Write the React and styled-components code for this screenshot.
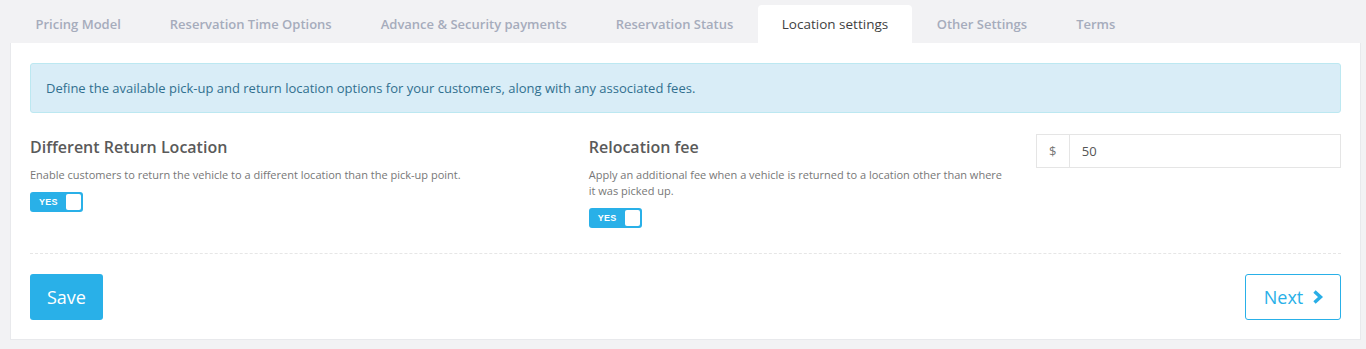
import React from "react";
import styled, { createGlobalStyle } from "styled-components";

const GlobalStyle = createGlobalStyle`
  html, body {
    margin: 0;
    padding: 0;
    background: #f2f2f4;
    font-family: "Open Sans", "Liberation Sans", sans-serif;
  }
  * { box-sizing: border-box; }
`;

const tabs = [
  "Pricing Model",
  "Reservation Time Options",
  "Advance & Security payments",
  "Reservation Status",
  "Location settings",
  "Other Settings",
  "Terms",
];

export default function App() {
  return (
    <Page>
      <GlobalStyle />
      <TabBar>
        {tabs.map((t) => (
          <Tab key={t} active={t === "Location settings"}>
            {t}
          </Tab>
        ))}
      </TabBar>
      <Panel>
        <Alert>
          Define the available pick-up and return location options for your
          customers, along with any associated fees.
        </Alert>
        <Row>
          <Col>
            <Title>Different Return Location</Title>
            <Help>
              Enable customers to return the vehicle to a different location
              than the pick-up point.
            </Help>
            <Toggle>
              <span>YES</span>
              <Knob />
            </Toggle>
          </Col>
          <Col>
            <Title>Relocation fee</Title>
            <Help>
              Apply an additional fee when a vehicle is returned to a location
              other than where it was picked up.
            </Help>
            <Toggle>
              <span>YES</span>
              <Knob />
            </Toggle>
          </Col>
          <Col>
            <InputGroup>
              <Addon>$</Addon>
              <Input defaultValue="50" />
            </InputGroup>
          </Col>
        </Row>
        <Divider />
        <Actions>
          <SaveButton>Save</SaveButton>
          <NextButton>
            Next
            <svg width="12" height="14" viewBox="0 0 12 14">
              <path
                d="M2.5 1.5 L8.5 7 L2.5 12.5"
                fill="none"
                stroke="#29aee6"
                strokeWidth="3.4"
                strokeLinejoin="miter"
              />
            </svg>
          </NextButton>
        </Actions>
      </Panel>
    </Page>
  );
}

const Page = styled.div`
  padding: 5px 5px 9px 10px;
  width: 1366px;
`;

const TabBar = styled.div`
  display: flex;
  padding-left: 1px;
  height: 38px;
`;

const Tab = styled.div`
  padding: 0 ${(p) => (p.active ? "24px" : "24.5px")};
  height: 38px;
  display: flex;
  align-items: center;
  font-size: ${(p) => (p.active ? "13.5px" : "13px")};
  font-weight: ${(p) => (p.active ? 400 : 600)};
  color: ${(p) => (p.active ? "#3f3f3f" : "#a6acbc")};
  background: ${(p) => (p.active ? "#ffffff" : "transparent")};
  border-radius: 4px 4px 0 0;
  white-space: nowrap;
`;

const Panel = styled.div`
  background: #fff;
  width: 1351px;
  height: 297px;
  border: 1px solid #e8e9ec;
  border-top: none;
  padding: 20px 19px 0 19px;
`;

const Alert = styled.div`
  height: 50px;
  background: #d9edf7;
  border: 1px solid #bce8f1;
  border-radius: 3px;
  color: #31708f;
  font-size: 13px;
  display: flex;
  align-items: center;
  padding: 0 15px 1px;
`;

const Row = styled.div`
  display: grid;
  grid-template-columns: 41.6667% 33.3333% 25%;
  margin: 0 -15px;
  padding-top: 22px;
`;

const Col = styled.div`
  padding: 0 15px;
`;

const Title = styled.div`
  font-size: 16px;
  font-weight: 600;
  color: #5a5a5a;
  line-height: 24px;
`;

const Help = styled.div`
  font-size: 11px;
  color: #777;
  line-height: 16px;
  margin-top: 8px;
`;

const Toggle = styled.div`
  margin-top: 9px;
  width: 53px;
  height: 20px;
  border-radius: 3px;
  background: #29b0e8;
  display: flex;
  align-items: center;
  justify-content: space-between;
  padding: 0 2px 0 9px;
  span {
    color: #fff;
    font-family: "Liberation Sans", Arial, sans-serif;
    font-weight: 700;
    font-size: 9px;
    letter-spacing: 0.3px;
  }
`;

const Knob = styled.div`
  width: 15px;
  height: 16px;
  background: #fff;
  border-radius: 2px;
`;

const InputGroup = styled.div`
  display: flex;
  height: 34px;
  border: 1px solid #e5e5e5;
  margin-top: -1px;
`;

const Addon = styled.div`
  width: 33px;
  border-right: 1px solid #e5e5e5;
  display: flex;
  align-items: center;
  justify-content: center;
  font-size: 13px;
  color: #777;
`;

const Input = styled.input`
  flex: 1;
  border: none;
  outline: none;
  padding: 0 12px;
  font-family: "Open Sans", "Liberation Sans", sans-serif;
  font-size: 13px;
  color: #555;
`;

const Divider = styled.div`
  border-top: 1px dashed #e6e6e6;
  margin-top: 25px;
`;

const Actions = styled.div`
  display: flex;
  justify-content: space-between;
  padding-top: 20px;
`;

const SaveButton = styled.button`
  width: 73px;
  height: 46px;
  border: none;
  border-radius: 3px;
  background: #29b0e8;
  color: #fff;
  font-family: "Open Sans", "Liberation Sans", sans-serif;
  font-size: 18px;
  padding: 0;
`;

const NextButton = styled.button`
  width: 96px;
  height: 46px;
  border: 1px solid #29b0e8;
  border-radius: 3px;
  background: #fff;
  color: #29b0e8;
  font-family: "Open Sans", "Liberation Sans", sans-serif;
  font-size: 18px;
  display: flex;
  align-items: center;
  justify-content: center;
  gap: 9px;
  padding: 0 0 0 2px;
`;
